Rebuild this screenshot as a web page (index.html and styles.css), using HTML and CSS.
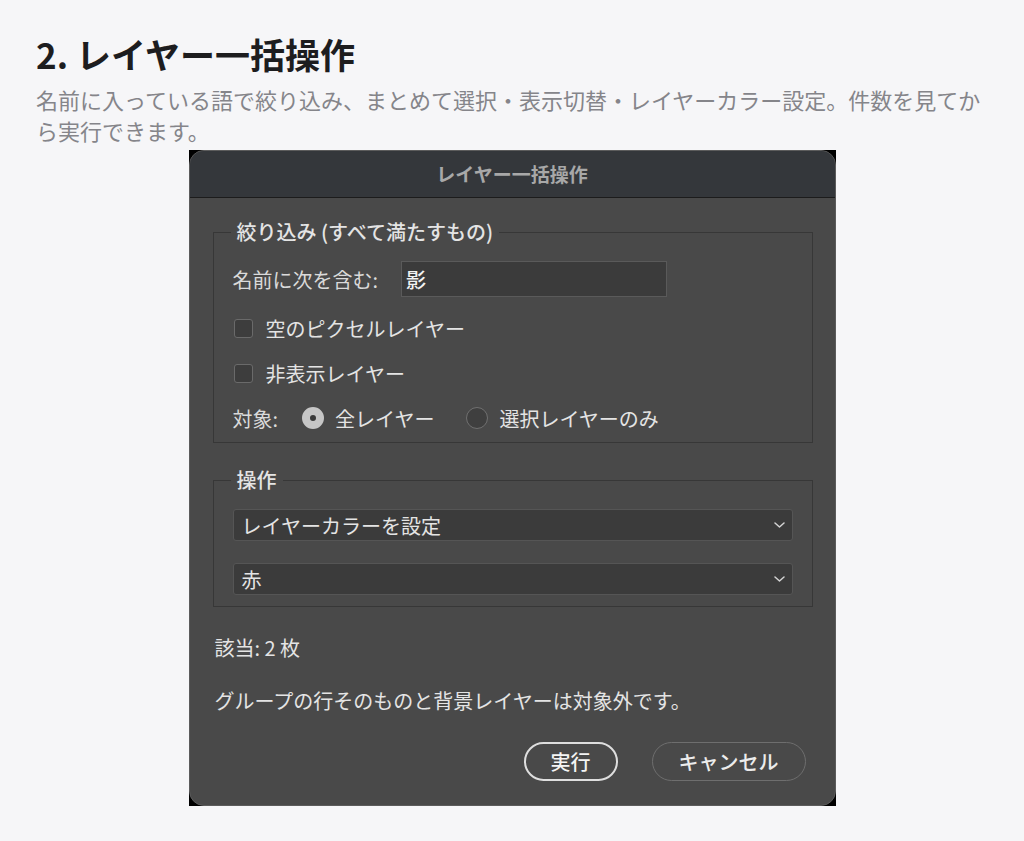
FILE: index.html
```html
<!DOCTYPE html>
<html lang="ja">
<head>
  <meta charset="UTF-8">
  <meta name="viewport" content="width=device-width, initial-scale=1.0">
  <title>レイヤー一括操作</title>
  <link rel="stylesheet" href="styles.css">
</head>
<body>
  <main class="page">
    <h1 class="heading">2. レイヤー一括操作</h1>
    <p class="lead">名前に入っている語で絞り込み、まとめて選択・表示切替・レイヤーカラー設定。件数を見てから実行できます。</p>

    <div class="shot">
      <div class="dialog">
        <div class="dialog-title">レイヤー一括操作</div>

        <div class="dialog-body">
          <fieldset class="group">
            <legend>絞り込み (すべて満たすもの)</legend>
            <div class="rows">
              <div class="row">
                <label class="label" for="name">名前に次を含む:</label>
                <input class="field" id="name" type="text" value="影">
              </div>
              <label class="row check">
                <input type="checkbox">
                <span>空のピクセルレイヤー</span>
              </label>
              <label class="row check">
                <input type="checkbox">
                <span>非表示レイヤー</span>
              </label>
              <div class="row">
                <span class="label">対象:</span>
                <label class="radio">
                  <input type="radio" name="target" checked>
                  <span>全レイヤー</span>
                </label>
                <label class="radio">
                  <input type="radio" name="target">
                  <span>選択レイヤーのみ</span>
                </label>
              </div>
            </div>
          </fieldset>

          <fieldset class="group group-ops">
            <legend>操作</legend>
            <div class="selects">
              <div class="select">
                <span>レイヤーカラーを設定</span>
                <svg width="11" height="6" viewBox="0 0 11 6"><path d="M1 1l4.5 4 4.5-4" fill="none" stroke="#d4d4d4" stroke-width="1.5" stroke-linecap="round" stroke-linejoin="round"/></svg>
              </div>
              <div class="select">
                <span>赤</span>
                <svg width="11" height="6" viewBox="0 0 11 6"><path d="M1 1l4.5 4 4.5-4" fill="none" stroke="#d4d4d4" stroke-width="1.5" stroke-linecap="round" stroke-linejoin="round"/></svg>
              </div>
            </div>
          </fieldset>

          <p class="count">該当: 2 枚</p>
          <p class="note">グループの行そのものと背景レイヤーは対象外です。</p>

          <div class="actions">
            <button class="btn btn-primary">実行</button>
            <button class="btn">キャンセル</button>
          </div>
        </div>
      </div>
    </div>
  </main>
</body>
</html>
```

FILE: styles.css
```css
body {
  margin: 0;
  background: #f6f6f8;
  font-family: "Noto Sans CJK JP", "Noto Sans", sans-serif;
  color: #1d1d1f;
}
.page {
  padding: 33px 36px 0;
}
.heading {
  margin: 0;
  font-size: 35px;
  line-height: 1.2;
  font-weight: bold;
}
.lead {
  margin: 9px 0 0;
  font-size: 22px;
  line-height: 31px;
  color: #85858a;
}

/* screenshot of the dialog */
.shot {
  width: 647px;
  height: 656px;
  margin: 4px auto 0;
  background: #000;
}
.dialog {
  height: 100%;
  box-sizing: border-box;
  background: #494949;
  border: 1px solid #5c5c5c;
  border-radius: 15px;
  overflow: hidden;
  color: #e4e4e4;
  font-size: 20px;
}
.dialog-title {
  height: 46px;
  line-height: 46px;
  text-align: center;
  background: #34373b;
  border-bottom: 1px solid #1c1c1c;
  color: #a8a8a8;
  font-size: 19px;
  font-weight: bold;
}
.dialog-body {
  padding: 20px 22px 0 23px;
}

.group {
  margin: 0;
  padding: 15px 19px 10px;
  border: 1px solid #373737;
}
.group legend {
  margin-left: -2px;
  padding: 0 6px;
  line-height: 28px;
  font-weight: 500;
}
.group-ops {
  margin-top: 23px;
  padding-bottom: 11px;
}

.rows {
  display: flex;
  flex-direction: column;
  gap: 17px;
}
.row {
  display: flex;
  align-items: center;
  height: 28px;
}
.row:first-child {
  height: 36px;
}
.label {
  color: #dadada;
}
.field {
  width: 266px;
  height: 36px;
  box-sizing: border-box;
  margin-left: 23px;
  padding: 0 4px;
  border: 1px solid #5a5a5a;
  background: #3b3b3b;
  color: #f2f2f2;
  font: inherit;
  font-weight: 500;
}
.field:focus {
  outline: none;
}

.check input {
  appearance: none;
  width: 19px;
  height: 19px;
  margin: 0 13px 0 1px;
  border: 1.5px solid #6a6a6a;
  border-radius: 3px;
  background: #3d3d3d;
}
.radio {
  display: flex;
  align-items: center;
  margin-left: 24px;
}
.radio + .radio {
  margin-left: 32px;
}
.radio input {
  appearance: none;
  width: 22px;
  height: 22px;
  margin: 0 11px 0 0;
  box-sizing: border-box;
  border: 1.5px solid #707070;
  border-radius: 50%;
  background: #3f3f3f;
}
.radio input:checked {
  border: 8px solid #c6c6c6;
  background: #3a3a3a;
}

.selects {
  display: flex;
  flex-direction: column;
  gap: 22px;
}
.select {
  display: flex;
  align-items: center;
  justify-content: space-between;
  height: 32px;
  box-sizing: border-box;
  padding: 0 7px 0 8px;
  border: 1px solid #555;
  border-radius: 3px;
  background: #3b3b3b;
}

.count {
  margin: 27px 0 0 2px;
  line-height: 28px;
}
.note {
  margin: 25px 0 0 2px;
  line-height: 28px;
}

.actions {
  display: flex;
  justify-content: flex-end;
  gap: 34px;
  margin-top: 27px;
  padding-right: 7px;
}
.btn {
  height: 39px;
  min-width: 154px;
  padding: 0 24px;
  border: 1.5px solid #6e6e6e;
  border-radius: 20px;
  background: transparent;
  color: #ececec;
  font: inherit;
  font-weight: 500;
}
.btn-primary {
  min-width: 94px;
  border: 2px solid #dedede;
  color: #f4f4f4;
}
```
